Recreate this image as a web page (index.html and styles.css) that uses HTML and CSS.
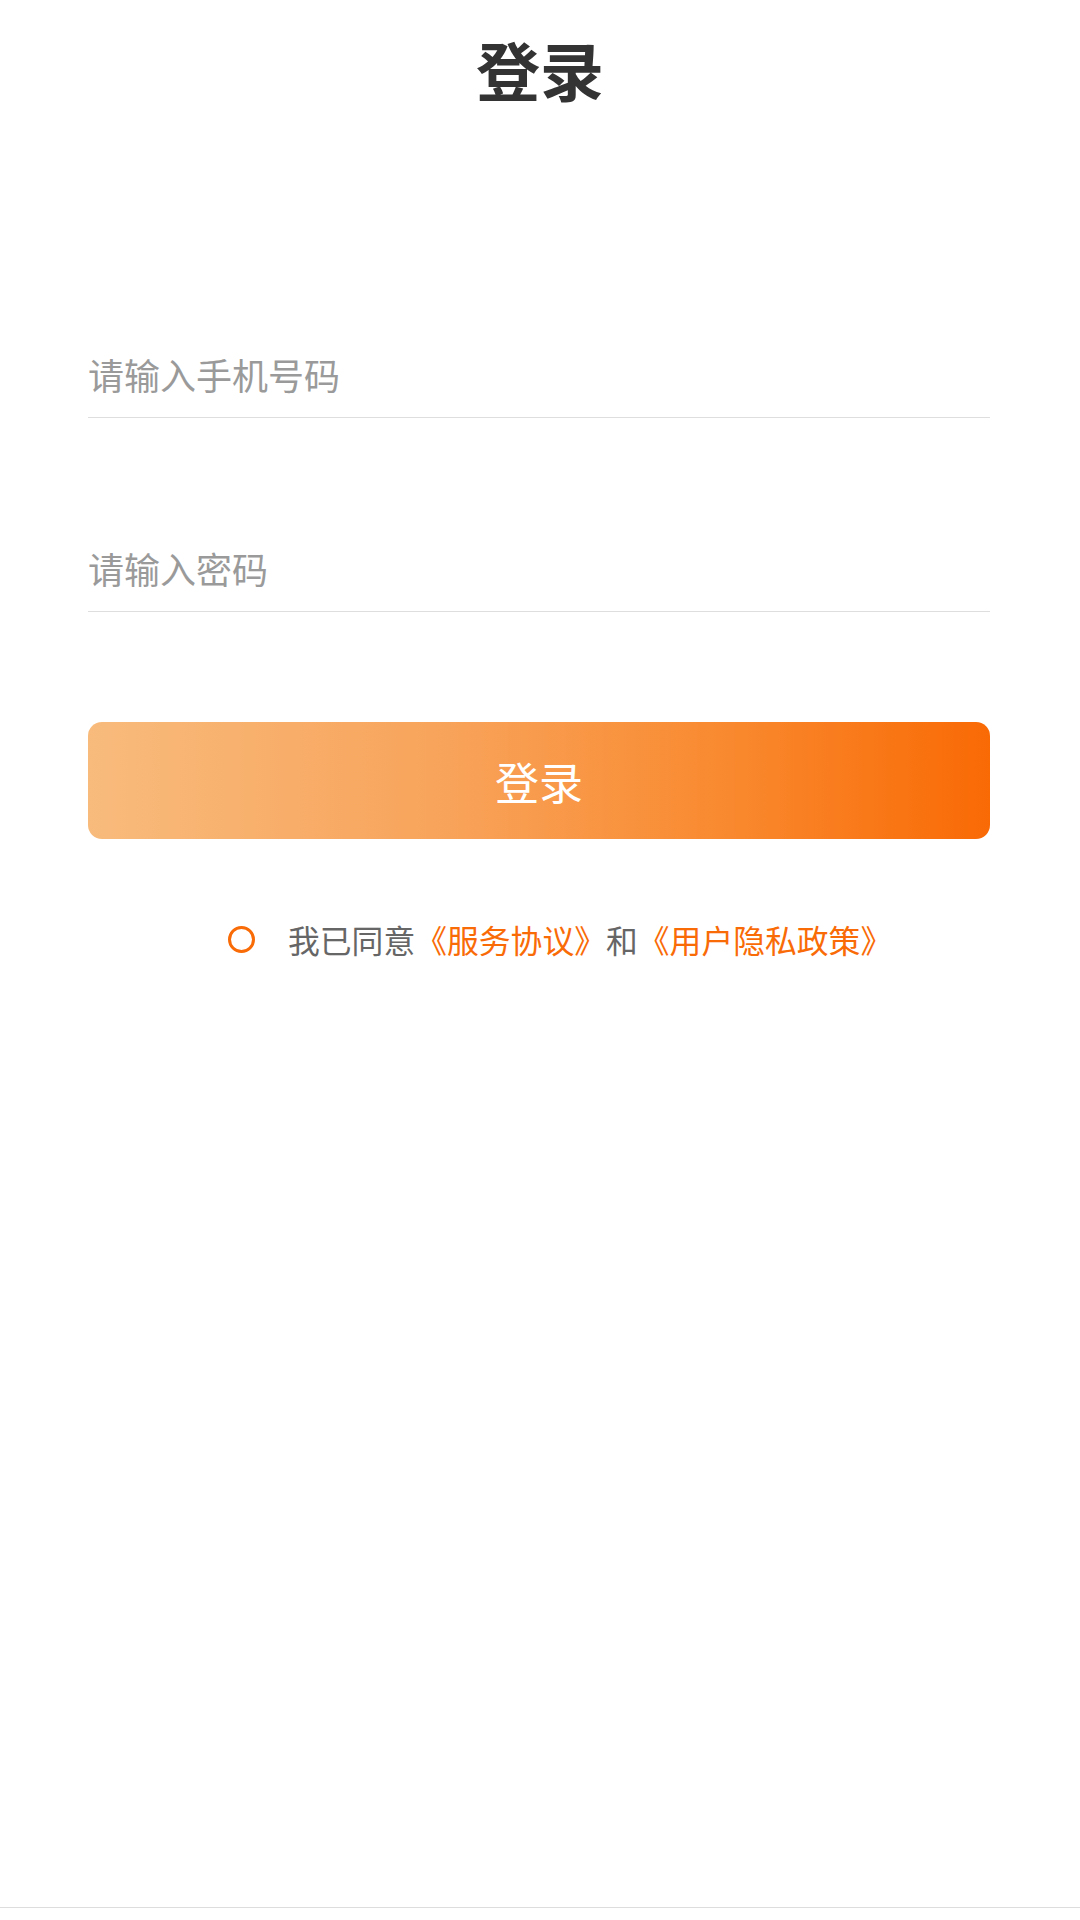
FILE: index.html
```html
<!DOCTYPE html>
<html lang="zh-CN">
<head>
<meta charset="utf-8">
<title>登录</title>
<link rel="stylesheet" href="styles.css">
</head>
<body>
<div class="page">
  <header class="header">
    <h1 class="title">登录</h1>
  </header>
  <main class="form">
    <div class="field field-phone">
      <input class="input" type="tel" placeholder="请输入手机号码">
    </div>
    <div class="field field-pwd">
      <input class="input" type="password" placeholder="请输入密码">
    </div>
    <button class="login-btn" type="button">登录</button>
    <div class="agree">
      <span class="radio"></span>
      <span class="agree-text">我已同意<span class="link">《服务协议》</span>和<span class="link">《用户隐私政策》</span></span>
    </div>
  </main>
  <div class="spacer"></div>
  <footer class="bottom-bar"></footer>
</div>
</body>
</html>
```
FILE: styles.css
```css
* {
  box-sizing: border-box;
}
html, body {
  margin: 0;
  padding: 0;
  background: #ffffff;
}
body {
  font-family: "Noto Sans CJK SC", "Noto Sans", sans-serif;
}
.page {
  width: 1080px;
  height: 1920px;
  display: flex;
  flex-direction: column;
}
.header {
  height: 144px;
  padding-bottom: 8px;
  display: flex;
  align-items: center;
  justify-content: center;
}
.title {
  margin: 0;
  font-size: 64px;
  line-height: 1;
  font-weight: 700;
  color: #333333;
}
.form {
  padding: 0 90px 0 88px;
  display: flex;
  flex-direction: column;
}
.field {
  height: 81px;
  border-bottom: 1px solid #dedede;
}
.field-phone {
  margin-top: 193px;
}
.field-pwd {
  margin-top: 113px;
}
.input {
  display: block;
  width: 100%;
  height: 80px;
  border: none;
  outline: none;
  padding: 0 0 6px 0;
  margin: 0;
  background: transparent;
  font-family: "Noto Sans CJK SC", "Noto Sans", sans-serif;
  font-size: 36px;
  line-height: 74px;
  color: #333333;
}
.input::placeholder {
  color: #9a9a9a;
}
.login-btn {
  margin-top: 110px;
  height: 117px;
  width: 100%;
  border: none;
  border-radius: 14px;
  background: linear-gradient(90deg, #f8bb7c 0%, #f8a35a 40%, #f98a30 70%, #f96a05 100%);
  color: #ffffff;
  font-family: "Noto Sans CJK SC", "Noto Sans", sans-serif;
  font-size: 44px;
  line-height: 1;
  padding: 0;
}
.agree {
  margin-top: 80px;
  display: flex;
  align-items: center;
  justify-content: flex-start;
  gap: 33px;
  padding-left: 140px;
}
.radio {
  width: 27px;
  height: 27px;
  border: 3px solid #f96b06;
  border-radius: 50%;
  flex: none;
}
.agree-text {
  font-size: 31.8px;
  line-height: 40px;
  color: #666666;
}
.link {
  color: #f96b06;
}
.spacer {
  flex: 1;
}
.bottom-bar {
  height: 13px;
  border-top: 1px solid #dddddd;
}
```
